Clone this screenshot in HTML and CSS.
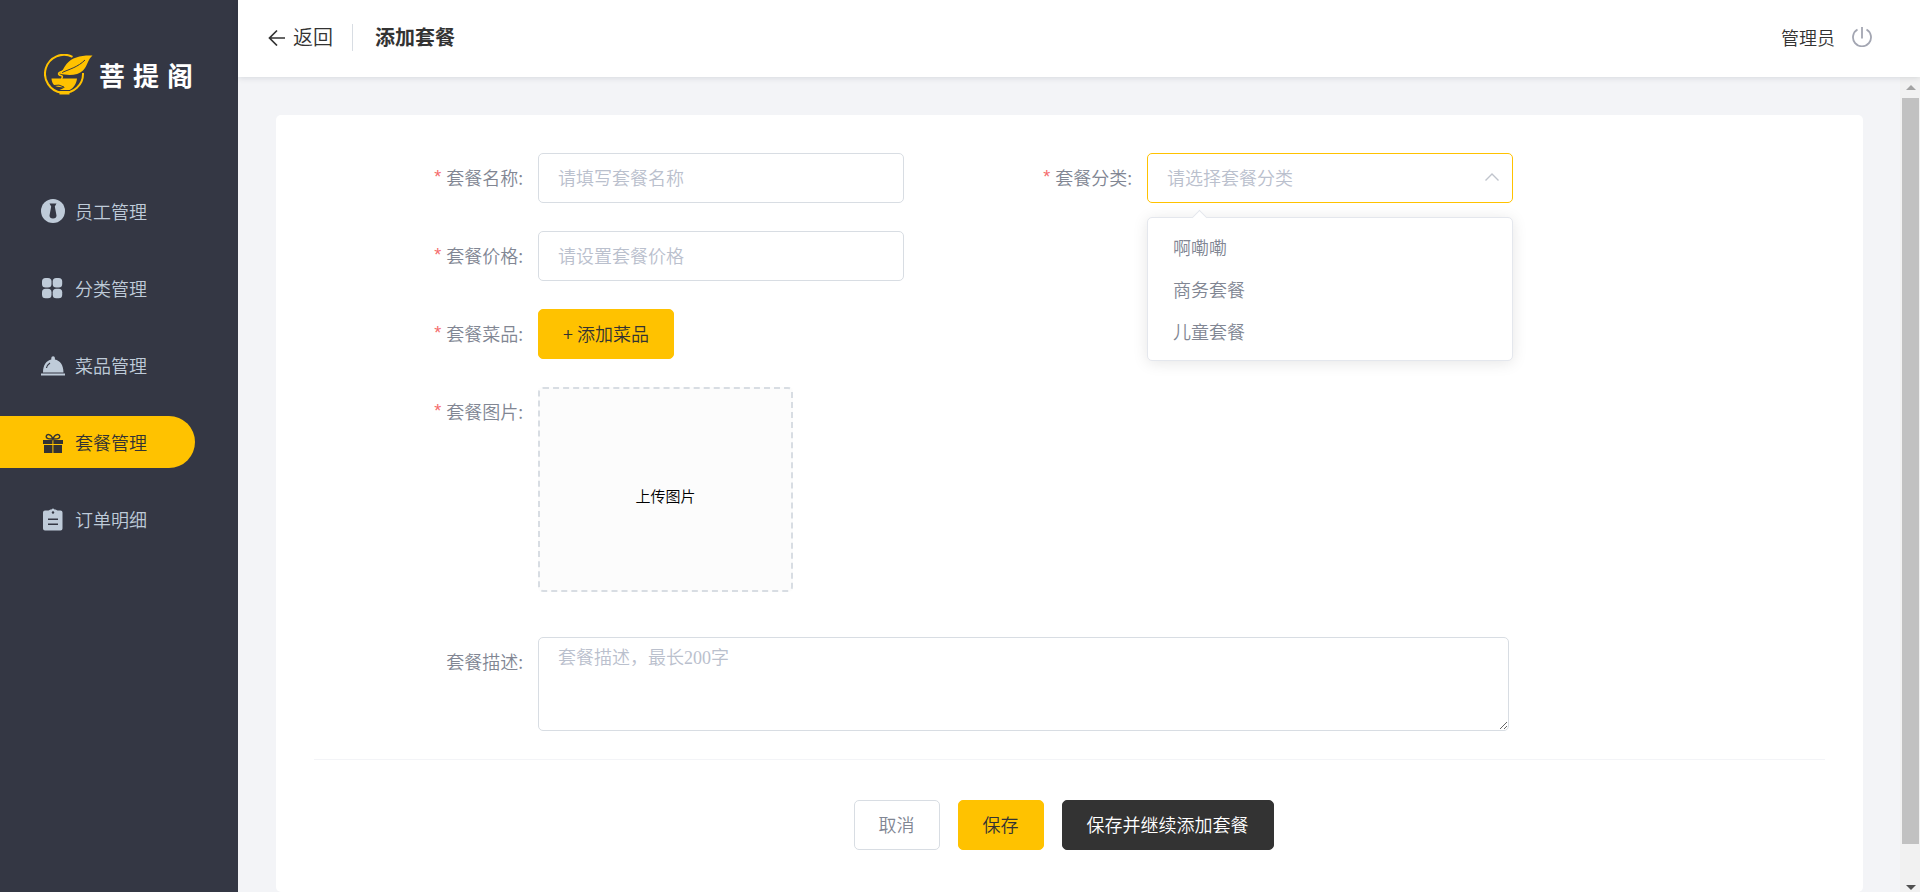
FILE: index.html
```html
<!DOCTYPE html>
<html lang="zh-CN">
<head>
<meta charset="utf-8">
<title>添加套餐</title>
<link rel="stylesheet" href="styles.css">
</head>
<body>
<div class="app">
  <aside class="sidebar">
    <div class="logo">
      <svg class="logo-mark" viewBox="0 0 50 42" aria-hidden="true">
        <path d="M28.500 2.800A19 19 0 1 0 39 19" fill="none" stroke="#ffc200" stroke-width="2"/>
        <path d="M48.500 1.500C38 1 28 3 22.500 10C19.500 14 19 16.500 15.500 19.500C24 22 34 21.500 39 16.500C43.500 12 43.500 6 48.500 1.500Z" fill="#ffc200"/>
        <path d="M18 18.500C26 15 34 13 41 6" fill="none" stroke="#343744" stroke-width="1"/>
        <path d="M19 17C13 18.500 14 21 17 21.500C19 22 18.500 23 17.500 25" fill="none" stroke="#ffc200" stroke-width="1.600"/>
        <path d="M7.500 24.500H33C32.500 30 29.500 34 25.500 36V40.500H15.500V36C18 35 20 34 21 33C16 33.500 12.500 33 10.500 31.500C8.500 29.500 7.600 27 7.500 24.500Z" fill="#ffc200"/>
        <path d="M10 31.500Q15 30 20 33M15 36.500H26" fill="none" stroke="#343744" stroke-width="1"/>
      </svg>
      <span class="logo-text"><span>菩</span><span>提</span><span>阁</span></span>
    </div>
    <nav class="menu">
      <a class="menu-item" href="#">
        <svg viewBox="0 0 24 24" aria-hidden="true"><circle cx="12" cy="12" r="12" fill="currentColor"/><path d="M8.500 4.500H15.500L13.800 7.500L15.500 16.500Q15.500 19.500 12 19.500Q8.500 19.500 8.500 16.500L10.200 7.500Z" fill="#343744"/></svg>
        <span>员工管理</span>
      </a>
      <a class="menu-item" href="#">
        <svg viewBox="0 0 24 24" aria-hidden="true" fill="currentColor"><rect x="1" y="2" width="9.500" height="9.500" rx="3.500"/><rect x="11.700" y="2" width="9.500" height="9.500" rx="3.500"/><rect x="1" y="12.700" width="9.500" height="9.500" rx="3.500"/><rect x="11.700" y="12.700" width="9.500" height="9.500" rx="3.500"/></svg>
        <span>分类管理</span>
      </a>
      <a class="menu-item" href="#">
        <svg viewBox="0 0 24 24" aria-hidden="true"><path d="M2 19.500C2 12 5.500 7.500 10.300 6.500V5a1.800 1.800 0 0 1 3.600 0V6.500C19 7.500 22.500 12 22.500 19.500ZM0 20.500h24v2H0Z" fill="currentColor"/><path d="M5.500 15Q6 12 9 10" fill="none" stroke="#343744" stroke-width="1.200"/></svg>
        <span>菜品管理</span>
      </a>
      <a class="menu-item active" href="#" aria-current="page">
        <svg viewBox="0 0 24 24" aria-hidden="true"><path d="M2 10H11.400V14H2ZM12.400 10H22V14H12.400ZM3 15H11.400V23H3ZM12.400 15H21V23H12.400Z" fill="currentColor"/><path d="M11.900 9C8 9.200 5 8.700 5.200 6.500C5.500 3.500 10 3.500 11.900 9C13.800 3.500 18.500 3.500 18.800 6.500C19 8.700 16 9.200 11.900 9Z" fill="none" stroke="currentColor" stroke-width="1.400"/></svg>
        <span>套餐管理</span>
      </a>
      <a class="menu-item" href="#">
        <svg viewBox="0 0 24 24" aria-hidden="true"><path d="M4 3.500H7.500L9.500 2.500H10.500Q12 .500 13.500 2.500H14.500L16.500 3.500H19.500Q21.500 3.500 21.500 5.500V21.500Q21.500 23.500 19.500 23.500H4Q2 23.500 2 21.500V5.500Q2 3.500 4 3.500Z" fill="currentColor"/><circle cx="12" cy="5.500" r="1.200" fill="#343744"/><path d="M7 12.200H17M7 17.200H17" stroke="#343744" stroke-width="1.500"/></svg>
        <span>订单明细</span>
      </a>
    </nav>
  </aside>

  <header class="topbar">
    <button class="back" type="button">
      <svg viewBox="0 0 18 18" aria-hidden="true"><path d="M9 2.500L1.500 10L9 17.500M1.500 10H17" fill="none" stroke="#333" stroke-width="1.700"/></svg>
      <span>返回</span>
    </button>
    <h1 class="title">添加套餐</h1>
    <div class="user">
      <span>管理员</span>
      <button class="logout" type="button" aria-label="退出">
        <svg viewBox="0 0 20 20" aria-hidden="true"><path d="M5.500 2.500A9 9 0 1 0 14.500 2.500M10 0V11.500" fill="none" stroke="#a3a6b2" stroke-width="1.800"/></svg>
      </button>
    </div>
  </header>

  <main class="content">
    <form class="card">
      <div class="fields">
        <label class="label required" for="name">套餐名称:</label>
        <input class="control" id="name" type="text" placeholder="请填写套餐名称">

        <label class="label required" for="category">套餐分类:</label>
        <div class="select">
          <select class="control open" id="category">
            <option value="">请选择套餐分类</option>
            <option>啊嘞嘞</option>
            <option>商务套餐</option>
            <option>儿童套餐</option>
          </select>
          <svg class="chevron" viewBox="0 0 14 8" aria-hidden="true"><path d="M.500 7.500L7 1L13.500 7.500" fill="none" stroke="#c0c4cc" stroke-width="1.400"/></svg>
          <ul class="dropdown">
            <li>啊嘞嘞</li>
            <li>商务套餐</li>
            <li>儿童套餐</li>
          </ul>
        </div>

        <label class="label required" for="price">套餐价格:</label>
        <input class="control" id="price" type="text" placeholder="请设置套餐价格">

        <label class="label required" for="dishes">套餐菜品:</label>
        <div class="wide"><button class="btn primary" id="dishes" type="button">+ 添加菜品</button></div>

        <label class="label required" for="picture">套餐图片:</label>
        <div class="wide"><button class="upload" id="picture" type="button">上传图片</button></div>

        <label class="label" for="desc">套餐描述:</label>
        <textarea class="control desc wide" id="desc" placeholder="套餐描述，最长200字"></textarea>
      </div>
      <div class="actions">
        <button class="btn" type="button">取消</button>
        <button class="btn primary" type="submit">保存</button>
        <button class="btn dark" type="button">保存并继续添加套餐</button>
      </div>
    </form>
  </main>

  <div class="scrollbar" aria-hidden="true">
    <svg class="arrow up" viewBox="0 0 10 5"><path d="M0 5L5 0L10 5Z"/></svg>
    <div class="thumb"></div>
    <svg class="arrow down" viewBox="0 0 10 5"><path d="M0 0L5 5L10 0Z"/></svg>
  </div>
</div>
</body>
</html>
```
FILE: styles.css
```css
* { box-sizing: border-box; }

body {
  margin: 0;
  background: #f3f4f7;
  color: #333;
  font: 350 18px/24px "Noto Sans CJK SC", "Liberation Sans", sans-serif;
}

button, input, select, textarea { font: inherit; color: inherit; }
button { cursor: pointer; }

.app {
  display: grid;
  grid-template: 77px 1fr / 238px 1fr 20px;
  height: 100vh;
  overflow: hidden;
}

/* Sidebar */
.sidebar {
  grid-row: 1 / 3;
  background: #343744;
}

.logo {
  display: flex;
  align-items: center;
  gap: 5px;
  padding: 54px 0 0 44px;
}
.logo-mark { width: 50px; height: 42px; }
.logo-text {
  display: flex;
  gap: 8px;
  color: #fff;
  font-size: 26px;
  font-weight: 700;
  line-height: 38px;
}

.menu {
  display: flex;
  flex-direction: column;
  gap: 25px;
  margin-top: 89px;
}
.menu-item {
  display: flex;
  align-items: center;
  gap: 10px;
  height: 52px;
  margin-right: 43px;
  padding-left: 41px;
  border-radius: 0 26px 26px 0;
  color: #bfcbd9;
  text-decoration: none;
}
.menu-item svg { width: 24px; height: 24px; }
.menu-item.active { background: #ffc200; color: #333; }

/* Top bar */
.topbar {
  grid-column: 2 / 4;
  display: flex;
  align-items: center;
  z-index: 1;
  padding: 0 48px 3px 30px;
  background: #fff;
  box-shadow: 0 1px 6px rgba(0, 21, 41, .12);
}
.back {
  display: flex;
  align-items: center;
  gap: 7px;
  height: 27px;
  padding: 0 19px 0 0;
  border: 0;
  border-right: 1px solid #d8dde3;
  background: none;
  font-size: 20px;
}
.back svg { width: 18px; height: 18px; }
.title {
  margin: 0 auto 0 22px;
  font-size: 20px;
  font-weight: 700;
}
.user { display: flex; align-items: center; gap: 17px; }
.logout { display: flex; padding: 0; border: 0; background: none; }
.logout svg { width: 20px; height: 20px; }

/* Form card */
.content { padding: 38px 37px 0 38px; }
.card {
  height: 100%;
  padding: 38px;
  border-radius: 5px;
  background: #fff;
}
.fields {
  display: grid;
  grid-template-columns: 224px minmax(0, 366px) 243px minmax(0, 366px);
  row-gap: 28px;
  padding-bottom: 28px;
  border-bottom: 1px solid #f3f4f7;
}
.label {
  grid-column: 1;
  display: flex;
  justify-content: flex-end;
  height: 48px;
  padding-right: 15px;
  color: #818693;
  line-height: 48px;
}
.label[for="category"] { grid-column: 3; }
.required::before {
  content: "*";
  margin-right: 5px;
  color: #f56c6c;
  font-family: "Liberation Sans", sans-serif;
}
.control {
  display: block;
  width: 100%;
  height: 50px;
  padding: 0 19px 2px;
  border: 1px solid #d8dde3;
  border-radius: 5px;
  outline: 0;
  background: #fff;
}
.control::placeholder { color: #bac0cd; opacity: 1; }
.wide { grid-column: 2 / 5; }

.select { position: relative; }
.select .control { appearance: none; color: #bac0cd; }
.select .open { border-color: #ffc200; }
.chevron {
  position: absolute;
  top: 20px;
  right: 14px;
  width: 14px;
  height: 8px;
}
.dropdown {
  position: absolute;
  top: 64px;
  left: 0;
  width: 100%;
  margin: 0;
  padding: 8px 0;
  border: 1px solid #e4e7ed;
  border-radius: 5px;
  background: #fff;
  box-shadow: 0 2px 15px rgba(0, 0, 0, .1);
  list-style: none;
}
.dropdown::before {
  content: "";
  position: absolute;
  top: -6px;
  left: 46px;
  width: 10px;
  height: 10px;
  border: solid #e4e7ed;
  border-width: 1px 0 0 1px;
  background: #fff;
  transform: rotate(45deg);
}
.dropdown li {
  padding: 0 25px;
  color: #818693;
  line-height: 42px;
}

.upload {
  display: block;
  width: 255px;
  height: 205px;
  margin-bottom: 17px;
  padding: 12px 0 0;
  border: 2px dashed #d8dde3;
  border-radius: 5px;
  background: #fcfcfc;
  color: #000;
  font-size: 15px;
}
.desc {
  max-width: 971px;
  height: 94px;
  padding: 8px 19px;
  font-family: "Liberation Serif", "Noto Sans CJK SC", serif;
}

.btn {
  height: 50px;
  padding: 0 24px 2px;
  border: 1px solid #d8dde3;
  border-radius: 5px;
  background: #fff;
  color: #818693;
}
.btn.primary { border-color: #ffc200; background: #ffc200; color: #333; }
.btn.dark { border-color: #333; background: #333; color: #fff; }
.actions {
  display: flex;
  justify-content: center;
  gap: 18px;
  padding: 40px 12px 0 0;
}

/* Scrollbar */
.scrollbar {
  display: flex;
  flex-direction: column;
  align-items: center;
  padding: 8px 1px 2px 2px;
  background: #f1f1f1;
}
.arrow { width: 10px; height: 5px; }
.up { fill: #a3a3a3; }
.down { fill: #505050; }
.thumb {
  flex: 1;
  width: 100%;
  margin: 8px 0 41px;
  background: #c1c1c1;
}
```
